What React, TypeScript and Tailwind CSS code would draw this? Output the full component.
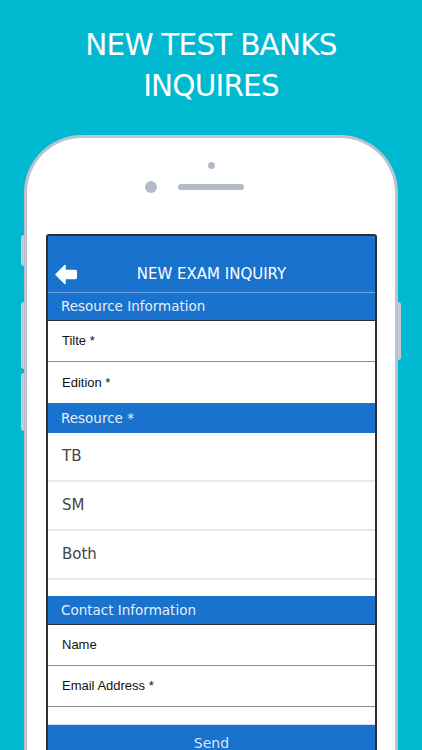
import React from 'react'

const blue = 'bg-[#1a72cf]'

function BackArrow() {
  return (
    <svg width="22" height="21" viewBox="0 0 22 21" className="shrink-0">
      <path
        d="M1 10.5 L10 1.5 L10 6.5 L20 6.5 Q21.5 6.5 21.5 8 L21.5 13 Q21.5 14.5 20 14.5 L10 14.5 L10 19.5 Z"
        fill="#ffffff"
        stroke="#ffffff"
        strokeWidth="1.5"
        strokeLinejoin="round"
      />
    </svg>
  )
}

function SectionHeader({ title, h }: { title: string; h: string }) {
  return (
    <div className={`${blue} ${h} flex items-center px-[13px] text-[13.5px] text-[#e4eefa] font-['DejaVu_Sans',sans-serif]`}>
      {title}
    </div>
  )
}

function FieldRow({ label, last }: { label: string; last?: boolean }) {
  return (
    <div
      className={`h-[41px] flex items-center px-[14px] bg-white text-[13px] text-[#111] font-['Liberation_Sans',Arial,sans-serif] ${last ? '' : 'border-b border-[#8c8c8c]'}`}
    >
      {label}
    </div>
  )
}

function OptionRow({ label }: { label: string }) {
  return (
    <div className="h-[49px] flex items-center px-[14px] bg-white border-b-2 border-[#e8e8e8] text-[15px] text-[#444] font-['DejaVu_Sans',sans-serif]">
      {label}
    </div>
  )
}

export default function App() {
  return (
    <div className="relative w-[422px] h-[750px] overflow-hidden bg-[#00b9d1] flex flex-col">
      {/* Headline */}
      <div className="pt-[25px] text-center text-white text-[29.5px] leading-[41px] font-['DejaVu_Sans',sans-serif] tracking-[-0.8px]">
        <div>NEW TEST BANKS</div>
        <div>INQUIRES</div>
      </div>

      {/* Phone */}
      <div className="relative mt-[28px] mx-[24px] flex-1 bg-white border-[3px] border-b-0 border-[#bcc3d0] rounded-t-[58px] flex flex-col">
        {/* side buttons */}
        <div className="absolute left-[-6px] top-[97px] w-[3px] h-[31px] bg-[#c4cad6] rounded-l-sm" />
        <div className="absolute left-[-6px] top-[164px] w-[3px] h-[67px] bg-[#c4cad6] rounded-l-sm" />
        <div className="absolute left-[-6px] top-[235px] w-[3px] h-[58px] bg-[#c4cad6] rounded-l-sm" />
        <div className="absolute right-[-6px] top-[164px] w-[3px] h-[58px] bg-[#c4cad6] rounded-r-sm" />

        {/* earpiece and camera */}
        <div className="mt-[24px] mx-auto w-[7px] h-[7px] rounded-full bg-[#b3bac9]" />
        <div className="mt-[12px] flex items-center justify-center gap-[21px]">
          <div className="w-[12px] h-[12px] rounded-full bg-[#b3bac9]" />
          <div className="w-[66px] h-[6px] rounded-full bg-[#b3bac9]" />
          <div className="w-[12px] h-[12px]" />
        </div>

        {/* Screen */}
        <div className="mt-[41px] ml-[19px] mr-[18px] flex-1 border-2 border-b-0 border-[#2e2e2e] rounded-t-[3px] bg-white flex flex-col">
          <div className={`${blue} pt-[20px]`}>
            <div className="relative h-[36px] flex items-center justify-center">
              <div className="absolute left-[7px] top-[8px]">
                <BackArrow />
              </div>
              <span className="text-white text-[15px] font-['DejaVu_Sans',sans-serif]">NEW EXAM INQUIRY</span>
            </div>
            <div className="h-px bg-[#6aa6e4]" />
          </div>

          <SectionHeader title="Resource Information" h="h-[27px]" />
          <div className="border-t border-[#2e2e2e]" />
          <FieldRow label="Tilte *" />
          <FieldRow label="Edition *" last />

          <SectionHeader title="Resource *" h="h-[30px]" />
          <OptionRow label="TB" />
          <OptionRow label="SM" />
          <OptionRow label="Both" />
          <div className="h-[16px] bg-white" />

          <SectionHeader title="Contact Information" h="h-[28px]" />
          <div className="border-t border-[#2e2e2e]" />
          <FieldRow label="Name" />
          <FieldRow label="Email Address *" />
          <div className="h-[18px] bg-white border-b border-[#cfe0f3]" />

          <div className={`${blue} flex-1 flex justify-center pt-[8px] text-[#d3e5f8] text-[14px] font-['DejaVu_Sans',sans-serif]`}>
            Send
          </div>
        </div>
      </div>
    </div>
  )
}
